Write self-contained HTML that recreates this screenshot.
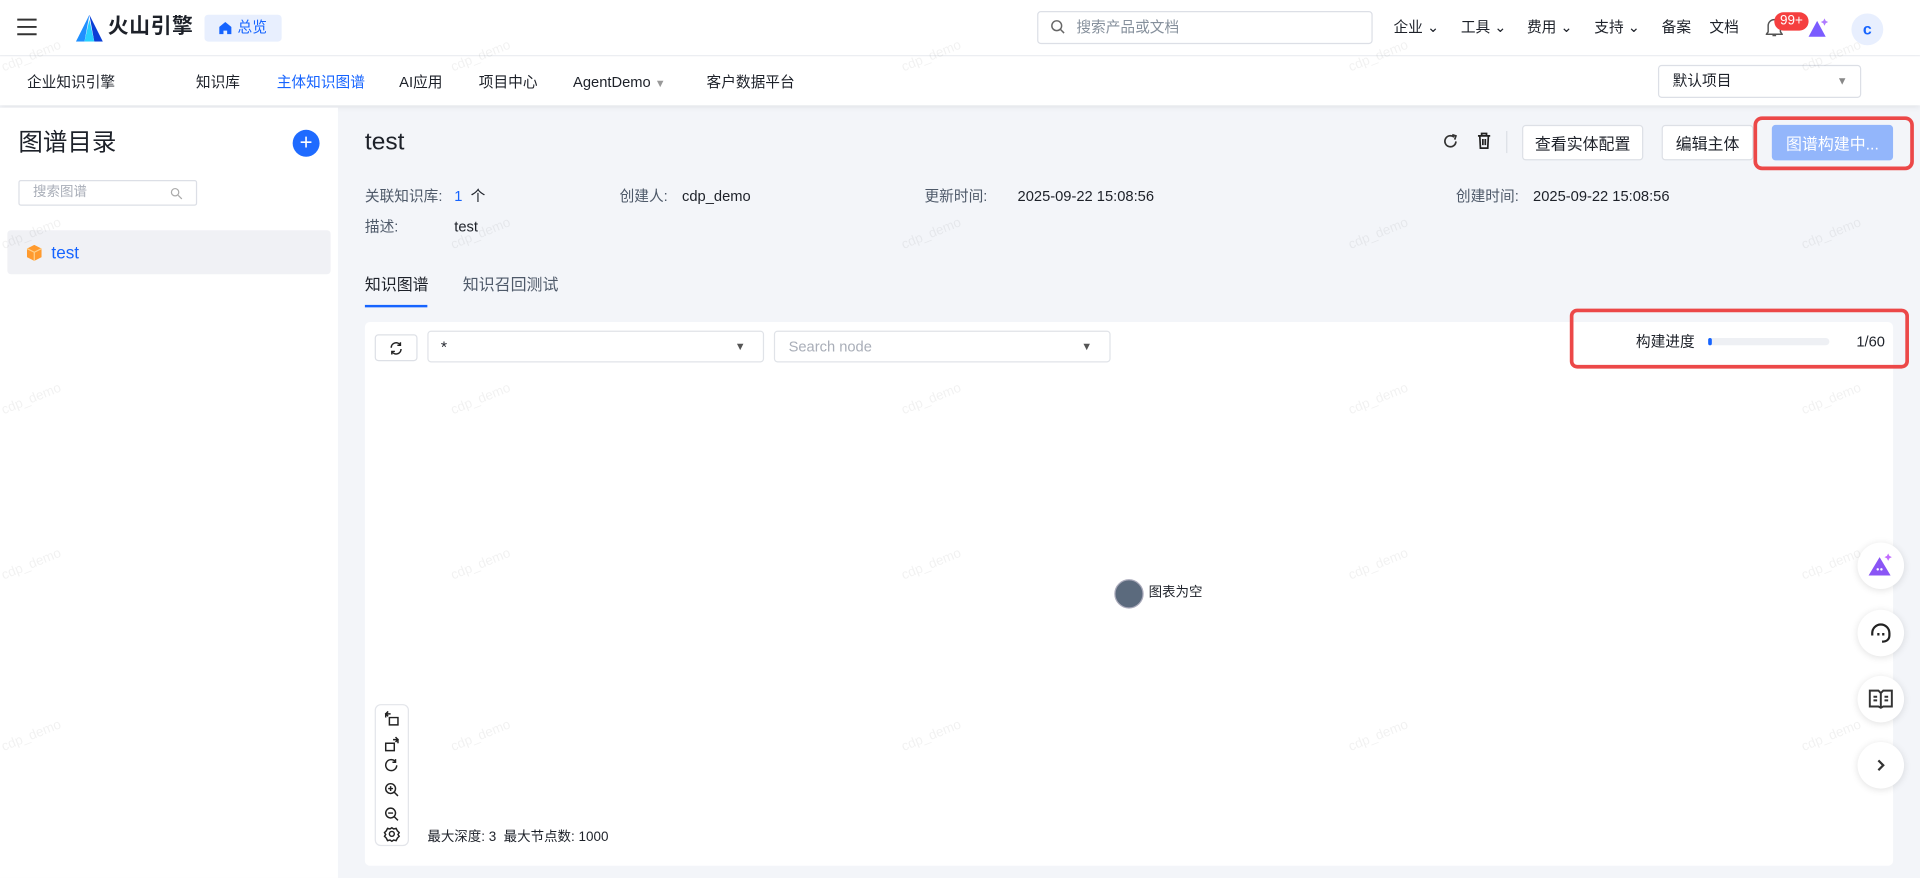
<!DOCTYPE html>
<html><head><meta charset="utf-8"><style>
*{box-sizing:border-box;margin:0;padding:0}
html,body{width:1920px;height:878px;overflow:hidden;background:#f3f5f9}
#w{position:absolute;left:0;top:0;width:1568px;height:717px;transform:scale(1.22449);transform-origin:0 0;font-family:"Liberation Sans","Noto Sans CJK SC",sans-serif;color:#1d2129;font-size:13px;background:#f3f5f9}
.a{position:absolute}
.t{position:absolute;white-space:nowrap;line-height:1}
.wm{position:absolute;color:rgba(0,0,0,0.055);font-size:11px;transform:rotate(-22deg);white-space:nowrap}
.btn{position:absolute;background:#fff;border:1px solid #dde0e6;border-radius:3px;font-size:13px;display:flex;align-items:center;justify-content:center}
.fb{position:absolute;width:38px;height:38px;border-radius:50%;background:#fff;box-shadow:0 1px 6px rgba(0,0,0,.12);display:flex;align-items:center;justify-content:center}
.lab{color:#4e5969;font-size:12px}
.val{font-size:12px}
</style></head><body><div id="w">
<div class="a" style="left:0;top:0;width:1568px;height:46px;background:#fff;border-bottom:1px solid #eceef2"></div>
<svg class="a" style="left:14px;top:15px" width="16" height="14"><path d="M0 1h16M0 7h16M0 13h16" stroke="#333" stroke-width="1.6"/></svg>
<svg class="a" style="left:60px;top:12px" width="26" height="22"><path d="M13 0L2 22h7z" fill="#1f8fff"/><path d="M13 0l4 22h7z" fill="#0a3fd6"/><path d="M13 4l-4 18h8z" fill="#29d0ff"/></svg>
<div class="t" style="left:88px;top:13px;font-size:17px;font-weight:bold;color:#1d2129;letter-spacing:0.5px">火山引擎</div>
<div class="a" style="left:167px;top:12px;width:63px;height:22px;background:#e8effe;border-radius:3px"></div>
<svg class="a" style="left:179px;top:18px" width="10" height="10"><path d="M5 0L0 4v6h3.5V7h3v3H10V4z" fill="#1664ff"/></svg>
<div class="t" style="left:194px;top:16px;font-size:12px;color:#1664ff">总览</div>
<div class="a" style="left:847px;top:9px;width:274px;height:27px;border:1px solid #dcdfe6;border-radius:3px"></div>
<svg class="a" style="left:858px;top:16px" width="12" height="12"><circle cx="5" cy="5" r="4" fill="none" stroke="#666" stroke-width="1.2"/><path d="M8 8l3 3" stroke="#666" stroke-width="1.2"/></svg>
<div class="t" style="left:879px;top:16px;font-size:12px;color:#86909c">搜索产品或文档</div>
<div class="t" style="left:1138px;top:16px;font-size:12px">企业 ⌄</div>
<div class="t" style="left:1193px;top:16px;font-size:12px">工具 ⌄</div>
<div class="t" style="left:1247px;top:16px;font-size:12px">费用 ⌄</div>
<div class="t" style="left:1302px;top:16px;font-size:12px">支持 ⌄</div>
<div class="t" style="left:1357px;top:16px;font-size:12px">备案</div>
<div class="t" style="left:1396px;top:16px;font-size:12px">文档</div>
<svg class="a" style="left:1442px;top:14px" width="14" height="17"><path d="M2 12V7a5 5 0 0110 0v5l1.5 2h-13z M5.5 15h3" fill="none" stroke="#555" stroke-width="1.2"/></svg>
<div class="a" style="left:1449px;top:10px;width:28px;height:15px;background:#f53f3f;border-radius:8px;color:#fff;font-size:11px;text-align:center;line-height:15px">99+</div>
<svg class="a" style="left:1476px;top:14px" width="18" height="18"><path d="M8 3L1 16h14z" fill="#7b5cff"/><path d="M14 1l1 2 2 1-2 1-1 2-1-2-2-1 2-1z" fill="#b07cff"/></svg>
<div class="a" style="left:1512px;top:11px;width:26px;height:26px;border-radius:50%;background:#e8effe;color:#1664ff;font-weight:bold;font-size:13px;text-align:center;line-height:26px">c</div>
<div class="a" style="left:0;top:46px;width:1568px;height:40px;background:#fff;box-shadow:0 2px 4px rgba(0,0,0,.06)"></div>
<div class="t" style="left:22px;top:61px;font-size:12px">企业知识引擎</div>
<div class="t" style="left:160px;top:61px;font-size:12px">知识库</div>
<div class="t" style="left:226px;top:61px;font-size:12px;color:#1664ff">主体知识图谱</div>
<div class="t" style="left:326px;top:61px;font-size:12px">AI应用</div>
<div class="t" style="left:391px;top:61px;font-size:12px">项目中心</div>
<div class="t" style="left:468px;top:61px;font-size:12px">AgentDemo <span style="color:#999;font-size:9px">▼</span></div>
<div class="t" style="left:577px;top:61px;font-size:12px">客户数据平台</div>
<div class="a" style="left:1354px;top:53px;width:166px;height:27px;border:1px solid #dcdfe6;border-radius:3px"></div>
<div class="t" style="left:1366px;top:60px;font-size:12px">默认项目</div>
<div class="t" style="left:1500px;top:62px;font-size:9px;color:#888">▼</div>
<div class="a" style="left:0;top:88px;width:276px;height:629px;background:#fff"></div>
<div class="t" style="left:15px;top:107px;font-size:20px">图谱目录</div>
<div class="a" style="left:239px;top:106px;width:22px;height:22px;border-radius:50%;background:#1f6bff;color:#fff;text-align:center;line-height:21px;font-size:18px">+</div>
<div class="a" style="left:15px;top:147px;width:146px;height:21px;border:1px solid #dcdfe6;border-radius:2px"></div>
<div class="t" style="left:27px;top:152px;font-size:11px;color:#a9aeb8">搜索图谱</div>
<svg class="a" style="left:139px;top:153px" width="10" height="10"><circle cx="4" cy="4" r="3" fill="none" stroke="#aaa"/><path d="M6.5 6.5l3 3" stroke="#aaa"/></svg>
<div class="a" style="left:6px;top:188px;width:264px;height:36px;background:#f0f1f5;border-radius:3px"></div>
<svg class="a" style="left:22px;top:200px" width="12" height="13"><path d="M6 0l6 3v7l-6 3-6-3V3z" fill="#ff9a2e"/><path d="M0 3l6 3 6-3M6 6v7" stroke="#ffd08a" fill="none"/></svg>
<div class="t" style="left:42px;top:199px;font-size:14px;color:#1664ff">test</div>
<div class="t" style="left:298px;top:106px;font-size:20px">test</div>
<svg class="a" style="left:1178px;top:109px" width="13" height="13"><path d="M11 6.5A4.5 4.5 0 1 1 9.5 3" fill="none" stroke="#333" stroke-width="1.4"/><path d="M8 1l3 1-1 3" fill="none" stroke="#333" stroke-width="1.4"/></svg>
<svg class="a" style="left:1206px;top:108px" width="12" height="14"><path d="M1 3h10M4 3V1h4v2M2.5 3l.5 10h6l.5-10M5 5.5v5M7 5.5v5" fill="none" stroke="#222" stroke-width="1.4"/></svg>
<div class="a" style="left:1230px;top:107px;width:1px;height:18px;background:#dcdfe6"></div>
<div class="btn" style="left:1243px;top:102px;width:99px;height:29px">查看实体配置</div>
<div class="btn" style="left:1357px;top:102px;width:75px;height:29px">编辑主体</div>
<div class="btn" style="left:1447px;top:102px;width:99px;height:29px;background:#93b6fb;border-color:#93b6fb;color:#fff">图谱构建中...</div>
<div class="a" style="left:1432px;top:95px;width:131px;height:44px;border:3px solid #ec4848;border-radius:7px"></div>
<div class="t lab" style="left:298px;top:154px">关联知识库:</div>
<div class="t val" style="left:371px;top:154px"><span style="color:#1664ff">1</span>&nbsp; 个</div>
<div class="t lab" style="left:506px;top:154px">创建人:</div>
<div class="t val" style="left:557px;top:154px">cdp_demo</div>
<div class="t lab" style="left:755px;top:154px">更新时间:</div>
<div class="t val" style="left:831px;top:154px">2025-09-22 15:08:56</div>
<div class="t lab" style="left:1189px;top:154px">创建时间:</div>
<div class="t val" style="left:1252px;top:154px">2025-09-22 15:08:56</div>
<div class="t lab" style="left:298px;top:179px">描述:</div>
<div class="t val" style="left:371px;top:179px">test</div>
<div class="t" style="left:298px;top:226px;font-size:13px">知识图谱</div>
<div class="t" style="left:378px;top:226px;font-size:13px;color:#4e5969">知识召回测试</div>
<div class="a" style="left:298px;top:249px;width:51px;height:2px;background:#1664ff"></div>
<div class="a" style="left:298px;top:263px;width:1248px;height:444px;background:#fff;border-radius:4px"></div>
<div class="btn" style="left:306px;top:273px;width:35px;height:22px"><svg width="11" height="11"><path d="M1.5 5A4 4 0 0 1 9 3M9.5 6A4 4 0 0 1 2 8M9 0.5V3H6.5M2 10.5V8h2.5" fill="none" stroke="#222" stroke-width="1.2"/></svg></div>
<div class="a" style="left:349px;top:270px;width:275px;height:26px;border:1px solid #e0e3e8;border-radius:3px"></div>
<div class="t" style="left:360px;top:277px;font-size:13px">*</div>
<div class="t" style="left:600px;top:279px;font-size:9px;color:#555">▼</div>
<div class="a" style="left:632px;top:270px;width:275px;height:26px;border:1px solid #e0e3e8;border-radius:3px"></div>
<div class="t" style="left:644px;top:277px;font-size:12px;color:#a9aeb8">Search node</div>
<div class="t" style="left:883px;top:279px;font-size:9px;color:#555">▼</div>
<div class="t" style="left:1336px;top:273px;font-size:12px">构建进度</div>
<div class="a" style="left:1395px;top:276px;width:99px;height:6px;background:#eef0f4;border-radius:3px"></div>
<div class="a" style="left:1395px;top:276px;width:3px;height:6px;background:#1664ff;border-radius:3px"></div>
<div class="t" style="left:1516px;top:273px;font-size:12px">1/60</div>
<div class="a" style="left:1282px;top:252px;width:277px;height:49px;border:3px solid #ec4848;border-radius:6px"></div>
<div class="a" style="left:910px;top:473px;width:24px;height:24px;border-radius:50%;background:#5b6a7d;border:1px solid #aab"></div>
<div class="t" style="left:938px;top:479px;font-size:11px">图表为空</div>
<div class="a" style="left:306px;top:575px;width:28px;height:116px;border:1px solid #e3e5ea;border-radius:5px"></div>
<svg class="a" style="left:313px;top:580px" width="14" height="108" fill="none" stroke="#222" stroke-width="1.2">
<path d="M5 6h7v6H5z M2 6V3h4M4 1L2 3l2 2"/>
<path d="M2 27h7v6H2z M12 27v-3H8M10 22l2 2-2 2"/>
<path d="M11 45a4.5 4.5 0 1 1-1.5-3.5M10 40v2.5H7.5"/>
<circle cx="6" cy="64" r="4"/><path d="M9 67l3 3M4 64h4M6 62v4"/>
<circle cx="6" cy="84" r="4"/><path d="M9 87l3 3M4 84h4"/>
<circle cx="7" cy="101" r="2"/><path d="M7 96l1.5 1 2-0.5 1 2 1.5 1.5-1 1.5 1 1.5-1.5 1.5-1 2-2-0.5L7 107l-1.5-1-2 .5-1-2L1 103l1-1.5-1-1.5 1.5-1.5 1-2 2 .5z"/>
</svg>
<div class="t" style="left:349px;top:679px;font-size:11px">最大深度: 3 &nbsp;最大节点数: 1000</div>
<div class="fb" style="left:1517px;top:443px"><svg width="22" height="20"><path d="M10 3L1 18h18z" fill="#8a55f5"/><circle cx="8.5" cy="13" r="1" fill="#fff"/><circle cx="11.5" cy="13" r="1" fill="#fff"/><path d="M17 0l1 2 2 1-2 1-1 2-1-2-2-1 2-1z" fill="#c26cff"/></svg></div>
<div class="fb" style="left:1517px;top:498px"><svg width="18" height="18" fill="none" stroke="#222" stroke-width="1.8"><path d="M2 11V9a7 7 0 0 1 14 0v2M16 11c0 3-2 5-6 5"/><path d="M7 9v2M11 9v2"/></svg></div>
<div class="fb" style="left:1517px;top:552px"><svg width="20" height="18" fill="none" stroke="#333" stroke-width="1.6"><path d="M1 2h7l2 2 2-2h7v13h-7l-2 1-2-1H1z M10 4v12M4 7h3M4 10h3M13 7h3M13 10h3"/></svg></div>
<div class="fb" style="left:1517px;top:606px"><svg width="10" height="12"><path d="M3 2l4 4-4 4" fill="none" stroke="#333" stroke-width="1.8"/></svg></div>
<div class="wm" style="left:0;top:40px">cdp_demo</div><div class="wm" style="left:367px;top:40px">cdp_demo</div><div class="wm" style="left:735px;top:40px">cdp_demo</div><div class="wm" style="left:1100px;top:40px">cdp_demo</div><div class="wm" style="left:1470px;top:40px">cdp_demo</div>
<div class="wm" style="left:0;top:185px">cdp_demo</div><div class="wm" style="left:367px;top:185px">cdp_demo</div><div class="wm" style="left:735px;top:185px">cdp_demo</div><div class="wm" style="left:1100px;top:185px">cdp_demo</div><div class="wm" style="left:1470px;top:185px">cdp_demo</div>
<div class="wm" style="left:0;top:320px">cdp_demo</div><div class="wm" style="left:367px;top:320px">cdp_demo</div><div class="wm" style="left:735px;top:320px">cdp_demo</div><div class="wm" style="left:1100px;top:320px">cdp_demo</div><div class="wm" style="left:1470px;top:320px">cdp_demo</div>
<div class="wm" style="left:0;top:455px">cdp_demo</div><div class="wm" style="left:367px;top:455px">cdp_demo</div><div class="wm" style="left:735px;top:455px">cdp_demo</div><div class="wm" style="left:1100px;top:455px">cdp_demo</div><div class="wm" style="left:1470px;top:455px">cdp_demo</div>
<div class="wm" style="left:0;top:595px">cdp_demo</div><div class="wm" style="left:367px;top:595px">cdp_demo</div><div class="wm" style="left:735px;top:595px">cdp_demo</div><div class="wm" style="left:1100px;top:595px">cdp_demo</div><div class="wm" style="left:1470px;top:595px">cdp_demo</div>
</div></body></html>
